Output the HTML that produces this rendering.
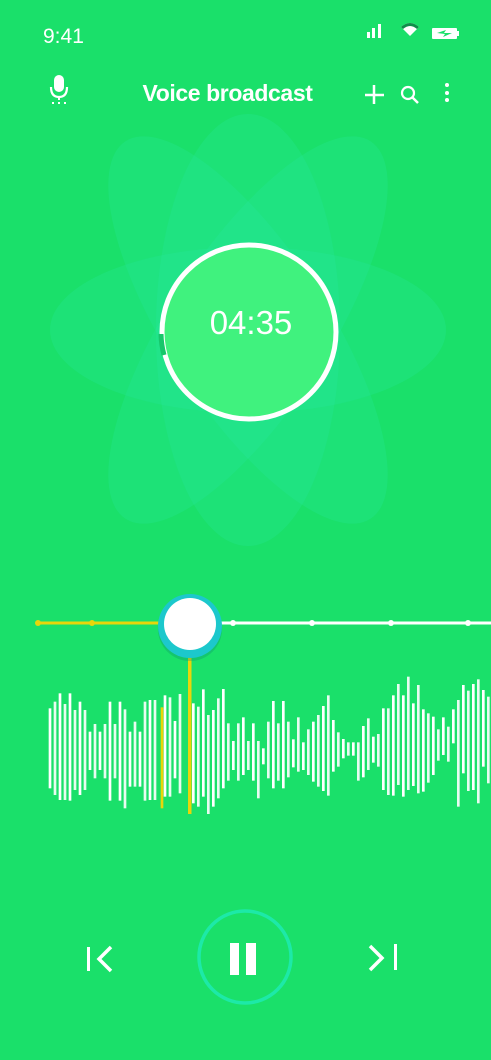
<!DOCTYPE html>
<html><head><meta charset="utf-8"><style>
html,body{margin:0;padding:0}
body{width:491px;height:1060px;background:#1ae06a;position:relative;overflow:hidden;font-family:"Liberation Sans",sans-serif;color:#fff}
.abs{position:absolute}
</style></head><body>
<div class="abs" style="left:43px;top:25px;font-size:21px;">9:41</div>
<svg class="abs" style="left:0;top:0" width="491" height="120">
  <rect x="367" y="32" width="3" height="6" fill="#fff"/>
  <rect x="372" y="28" width="3" height="10" fill="#fff"/>
  <rect x="378" y="24" width="3" height="14" fill="#fff"/>
  <path d="M401 27 Q410 19 419 27 L410 36 Z" fill="#fff"/>
  <path d="M401 27 Q410 19 419 27 L417 29 Q410 23 403 29Z" fill="#0e8f4a"/>
  <rect x="432" y="28" width="25" height="11" rx="1" fill="#fff"/>
  <rect x="457" y="31" width="2" height="5" fill="#fff"/>
  <path d="M437 33 L446 30 L444 33 L452 33 L443 37 L445 34 Z" fill="#1ae06a"/>
  <rect x="54" y="75" width="10" height="17" rx="5" fill="#fff"/>
  <path d="M51 87 Q51 97 59 97 Q67 97 67 87" stroke="#fff" stroke-width="2.2" fill="none"/>
  <rect x="58" y="96" width="2" height="4" fill="#fff"/>
  <rect x="52" y="102" width="2" height="2" fill="#fff"/><rect x="58" y="102" width="2" height="2" fill="#fff"/><rect x="64" y="102" width="2" height="2" fill="#fff"/>
  <path d="M374 85 V104 M365 95 H384" stroke="#fff" stroke-width="2.5"/>
  <circle cx="408" cy="93" r="6" stroke="#fff" stroke-width="2.2" fill="none"/>
  <path d="M412 97 L418 103" stroke="#fff" stroke-width="2.5"/>
  <circle cx="447" cy="85" r="2" fill="#fff"/><circle cx="447" cy="93" r="2" fill="#fff"/><circle cx="447" cy="100" r="2" fill="#fff"/>
</svg>
<div class="abs" style="left:0;width:455px;text-align:center;top:80px;font-size:23px;font-weight:bold;letter-spacing:-0.4px">Voice broadcast</div>

<svg class="abs" style="left:0;top:0" width="491" height="1060">
  <g fill="rgba(40,232,170,0.22)">
    <ellipse cx="248" cy="330" rx="92" ry="216"/>
    <ellipse cx="248" cy="330" rx="198" ry="83"/>
    <ellipse cx="248" cy="330" rx="80" ry="225" transform="rotate(-33 248 330)"/>
    <ellipse cx="248" cy="330" rx="80" ry="225" transform="rotate(33 248 330)"/>
  </g>
  <circle cx="249" cy="332" r="87" fill="#40f27e" stroke="#fff" stroke-width="5"/>
  <path d="M161 334 A88 88 0 0 0 164 355" stroke="#17c76a" stroke-width="5" fill="none"/>
  <text x="251" y="334" font-size="33" text-anchor="middle" fill="#fff" font-family="Liberation Sans">04:35</text>

  <line x1="38" y1="623" x2="162" y2="623" stroke="#e8d60a" stroke-width="3"/>
  <circle cx="38" cy="623" r="3" fill="#e8d60a"/><circle cx="92" cy="623" r="3" fill="#e8d60a"/>
  <line x1="218" y1="623" x2="491" y2="623" stroke="#fff" stroke-width="3"/>
  <circle cx="233" cy="623" r="3" fill="#fff"/><circle cx="312" cy="623" r="3" fill="#fff"/><circle cx="391" cy="623" r="3" fill="#fff"/><circle cx="468" cy="623" r="3" fill="#fff"/>

  <g transform="translate(30,590) scale(0.33333)">
  <g fill="#fff">
    <rect x="56" y="355" width="8" height="240"/>
    <rect x="71" y="335" width="8" height="280" opacity=".9"/>
    <rect x="86" y="310" width="8" height="320"/>
    <rect x="101" y="342" width="8" height="288" opacity=".9"/>
    <rect x="116" y="310" width="8" height="322"/>
    <rect x="131" y="360" width="8" height="240" opacity=".9"/>
    <rect x="146" y="335" width="8" height="280"/>
    <rect x="161" y="360" width="8" height="240" opacity=".9"/>
    <rect x="176" y="425" width="8" height="115"/>
    <rect x="191" y="402" width="8" height="163" opacity=".9"/>
    <rect x="206" y="425" width="8" height="115"/>
    <rect x="221" y="402" width="8" height="163" opacity=".9"/>
    <rect x="236" y="335" width="8" height="297"/>
    <rect x="251" y="402" width="8" height="163" opacity=".9"/>
    <rect x="266" y="335" width="8" height="297"/>
    <rect x="281" y="358" width="8" height="297" opacity=".9"/>
    <rect x="296" y="425" width="8" height="165"/>
    <rect x="311" y="395" width="8" height="195" opacity=".9"/>
    <rect x="326" y="425" width="8" height="165"/>
    <rect x="341" y="335" width="8" height="297" opacity=".9"/>
    <rect x="356" y="330" width="8" height="300"/>
    <rect x="371" y="330" width="8" height="300" opacity=".9"/>
    <rect x="401" y="316" width="8" height="304"/>
    <rect x="416" y="322" width="8" height="298" opacity=".9"/>
    <rect x="431" y="393" width="8" height="172"/>
    <rect x="446" y="312" width="8" height="298" opacity=".9"/>
    <rect x="486" y="340" width="8" height="300"/>
    <rect x="501" y="350" width="8" height="300" opacity=".9"/>
    <rect x="516" y="298" width="8" height="322"/>
    <rect x="531" y="375" width="8" height="297" opacity=".9"/>
    <rect x="546" y="360" width="8" height="290"/>
    <rect x="561" y="325" width="8" height="300" opacity=".9"/>
    <rect x="576" y="297" width="8" height="298"/>
    <rect x="591" y="400" width="8" height="172" opacity=".9"/>
    <rect x="606" y="453" width="8" height="87"/>
    <rect x="621" y="400" width="8" height="172" opacity=".9"/>
    <rect x="636" y="382" width="8" height="173"/>
    <rect x="651" y="453" width="8" height="87" opacity=".9"/>
    <rect x="666" y="400" width="8" height="172"/>
    <rect x="681" y="453" width="8" height="172" opacity=".9"/>
    <rect x="696" y="475" width="8" height="48"/>
    <rect x="711" y="395" width="8" height="170" opacity=".9"/>
    <rect x="726" y="333" width="8" height="262"/>
    <rect x="741" y="400" width="8" height="172" opacity=".9"/>
    <rect x="756" y="333" width="8" height="262"/>
    <rect x="771" y="395" width="8" height="167" opacity=".9"/>
    <rect x="786" y="448" width="8" height="84"/>
    <rect x="801" y="382" width="8" height="163" opacity=".9"/>
    <rect x="816" y="457" width="8" height="83"/>
    <rect x="831" y="418" width="8" height="137" opacity=".9"/>
    <rect x="846" y="395" width="8" height="180"/>
    <rect x="861" y="375" width="8" height="215" opacity=".9"/>
    <rect x="876" y="348" width="8" height="255"/>
    <rect x="891" y="316" width="8" height="301" opacity=".9"/>
    <rect x="906" y="390" width="8" height="155"/>
    <rect x="921" y="427" width="8" height="103" opacity=".9"/>
    <rect x="936" y="447" width="8" height="58"/>
    <rect x="951" y="457" width="8" height="40" opacity=".9"/>
    <rect x="966" y="457" width="8" height="40"/>
    <rect x="981" y="457" width="8" height="115" opacity=".9"/>
    <rect x="996" y="408" width="8" height="154"/>
    <rect x="1011" y="385" width="8" height="155" opacity=".9"/>
    <rect x="1026" y="440" width="8" height="78"/>
    <rect x="1041" y="432" width="8" height="98" opacity=".9"/>
    <rect x="1056" y="355" width="8" height="245"/>
    <rect x="1071" y="355" width="8" height="260" opacity=".9"/>
    <rect x="1086" y="316" width="8" height="301"/>
    <rect x="1101" y="282" width="8" height="303" opacity=".9"/>
    <rect x="1116" y="316" width="8" height="304"/>
    <rect x="1131" y="260" width="8" height="340" opacity=".9"/>
    <rect x="1146" y="340" width="8" height="248"/>
    <rect x="1161" y="285" width="8" height="325" opacity=".9"/>
    <rect x="1176" y="358" width="8" height="247"/>
    <rect x="1191" y="370" width="8" height="208" opacity=".9"/>
    <rect x="1206" y="380" width="8" height="175"/>
    <rect x="1221" y="418" width="8" height="94" opacity=".9"/>
    <rect x="1236" y="382" width="8" height="113"/>
    <rect x="1251" y="410" width="8" height="105" opacity=".9"/>
    <rect x="1266" y="358" width="8" height="102"/>
    <rect x="1281" y="330" width="8" height="320" opacity=".9"/>
    <rect x="1296" y="285" width="8" height="265"/>
    <rect x="1311" y="302" width="8" height="301" opacity=".9"/>
    <rect x="1326" y="282" width="8" height="318"/>
    <rect x="1341" y="268" width="8" height="372" opacity=".9"/>
    <rect x="1356" y="300" width="8" height="230"/>
    <rect x="1371" y="320" width="8" height="260" opacity=".9"/>
  </g>
  <rect x="392" y="352" width="8" height="303" fill="#e8d60a"/>
  </g>
  <rect x="188" y="650" width="3.5" height="164" fill="#e8d60a"/>
  <circle cx="190" cy="629" r="32" fill="#0a8a70" opacity=".3"/>
  <circle cx="190" cy="626" r="32" fill="#1cc8cc"/>
  <circle cx="190" cy="624" r="26" fill="#fff"/>

  <rect x="87" y="947" width="3" height="24" fill="#fff"/>
  <path d="M111 947 L99 959 L111 971" stroke="#fff" stroke-width="3.5" fill="none"/>
  <circle cx="245" cy="957" r="46" stroke="#1de9a8" stroke-width="3.5" fill="none"/>
  <rect x="230" y="943" width="9" height="32" fill="#fff"/>
  <rect x="246" y="943" width="10" height="32" fill="#fff"/>
  <path d="M370 946 L382 958 L370 970" stroke="#fff" stroke-width="3.5" fill="none"/>
  <rect x="394" y="944" width="3" height="26" fill="#fff"/>
</svg>
</body></html>
